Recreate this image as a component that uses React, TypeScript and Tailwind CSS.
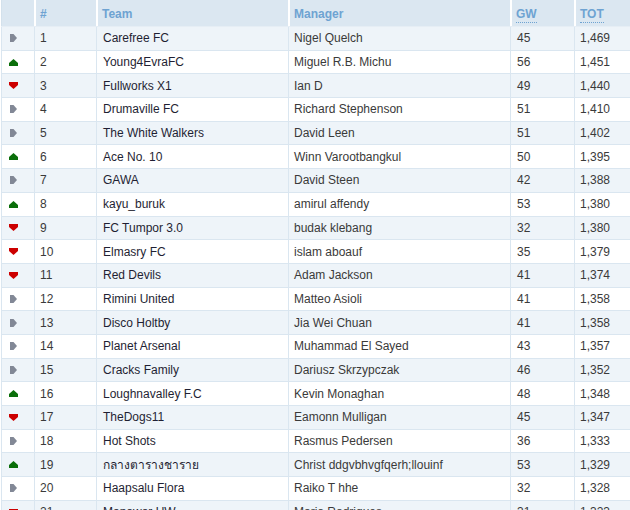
import React from "react";

type Move = "up" | "down" | "same";

const rows: [Move, string, string, number, string][] = [
  ["same", "Carefree FC", "Nigel Quelch", 45, "1,469"],
  ["up", "Young4EvraFC", "Miguel R.B. Michu", 56, "1,451"],
  ["down", "Fullworks X1", "Ian D", 49, "1,440"],
  ["same", "Drumaville FC", "Richard Stephenson", 51, "1,410"],
  ["same", "The White Walkers", "David Leen", 51, "1,402"],
  ["up", "Ace No. 10", "Winn Varootbangkul", 50, "1,395"],
  ["same", "GAWA", "David Steen", 42, "1,388"],
  ["up", "kayu_buruk", "amirul affendy", 53, "1,380"],
  ["down", "FC Tumpor 3.0", "budak klebang", 32, "1,380"],
  ["down", "Elmasry FC", "islam aboauf", 35, "1,379"],
  ["down", "Red Devils", "Adam Jackson", 41, "1,374"],
  ["same", "Rimini United", "Matteo Asioli", 41, "1,358"],
  ["same", "Disco Holtby", "Jia Wei Chuan", 41, "1,358"],
  ["same", "Planet Arsenal", "Muhammad El Sayed", 43, "1,357"],
  ["same", "Cracks Family", "Dariusz Skrzypczak", 46, "1,352"],
  ["up", "Loughnavalley F.C", "Kevin Monaghan", 48, "1,348"],
  ["down", "TheDogs11", "Eamonn Mulligan", 45, "1,347"],
  ["same", "Hot Shots", "Rasmus Pedersen", 36, "1,333"],
  ["up", "กลางตารางชาราย", "Christ ddgvbhvgfqerh;llouinf", 53, "1,329"],
  ["same", "Haapsalu Flora", "Raiko T hhe", 32, "1,328"],
  ["down", "Manowar UW", "Mario Rodrigues", 31, "1,323"],
];

function MoveIcon({ move }: { move: Move }) {
  if (move === "up")
    return (
      <svg width="9" height="7" viewBox="0 0 9 7" className="ml-[7px]">
        <polygon points="0,7 0,4 4.5,0 9,4 9,7" fill="#0a6e0a" />
      </svg>
    );
  if (move === "down")
    return (
      <svg width="9" height="7" viewBox="0 0 9 7" className="ml-[7px]">
        <polygon points="0,0 9,0 9,3 4.5,7 0,3" fill="#cc0000" />
      </svg>
    );
  return (
    <svg width="7" height="8" viewBox="0 0 7 8" className="ml-[8px]">
      <polygon points="0,0 3.5,0 7,4 3.5,8 0,8" fill="#828896" />
    </svg>
  );
}

const grid = "grid grid-cols-[33px_62px_192px_222px_64px_1fr]";

export default function App() {
  return (
    <div
      className="h-[510px] w-[630px] overflow-hidden bg-white text-[12px]"
      style={{ fontFamily: '"Liberation Sans", Arial, sans-serif' }}
    >
      <div className="ml-px w-[629px]">
        <div className={`${grid} h-[27px] bg-[#dbe7f1] border-b border-[#e6eef5] font-bold text-[#6ea3d2]`}>
          <div className="border-l border-[#d3e1ec]" />
          <div className="border-l-2 border-white pl-[4px] pt-[5px]">#</div>
          <div className="border-l-2 border-white pl-[4px] pt-[5px]">Team</div>
          <div className="border-l-2 border-white pl-[4px] pt-[5px]">Manager</div>
          <div className="border-l-2 border-white pl-[4px] pt-[5px]">
            <span className="border-b border-dotted border-[#6ea3d2] pb-[1px]">GW</span>
          </div>
          <div className="border-l-2 border-white pl-[4px] pt-[5px]">
            <span className="border-b border-dotted border-[#6ea3d2] pb-[1px]">TOT</span>
          </div>
        </div>
        {rows.map(([move, team, manager, gw, tot], i) => (
          <div
            key={i}
            className={`${grid} h-[23.7px] border-b border-[#dae6f0] items-center ${
              i % 2 === 0 ? "bg-[#eef4f9]" : "bg-white"
            } text-[#3a3a3a]`}
          >
            <div className="flex h-full items-center border-l border-[#dae6f0]">
              <MoveIcon move={move} />
            </div>
            <div className="flex h-full items-center border-l border-[#dae6f0] pl-[5px]">{i + 1}</div>
            <div className="flex h-full items-center border-l border-[#dae6f0] pl-[6px] text-[#1f1f33]">
              {team}
            </div>
            <div className="flex h-full items-center border-l border-[#dae6f0] pl-[5px]">{manager}</div>
            <div className="flex h-full items-center border-l border-[#dae6f0] pl-[6px]">{gw}</div>
            <div className="flex h-full items-center border-l border-[#dae6f0] pl-[5px]">{tot}</div>
          </div>
        ))}
      </div>
    </div>
  );
}
